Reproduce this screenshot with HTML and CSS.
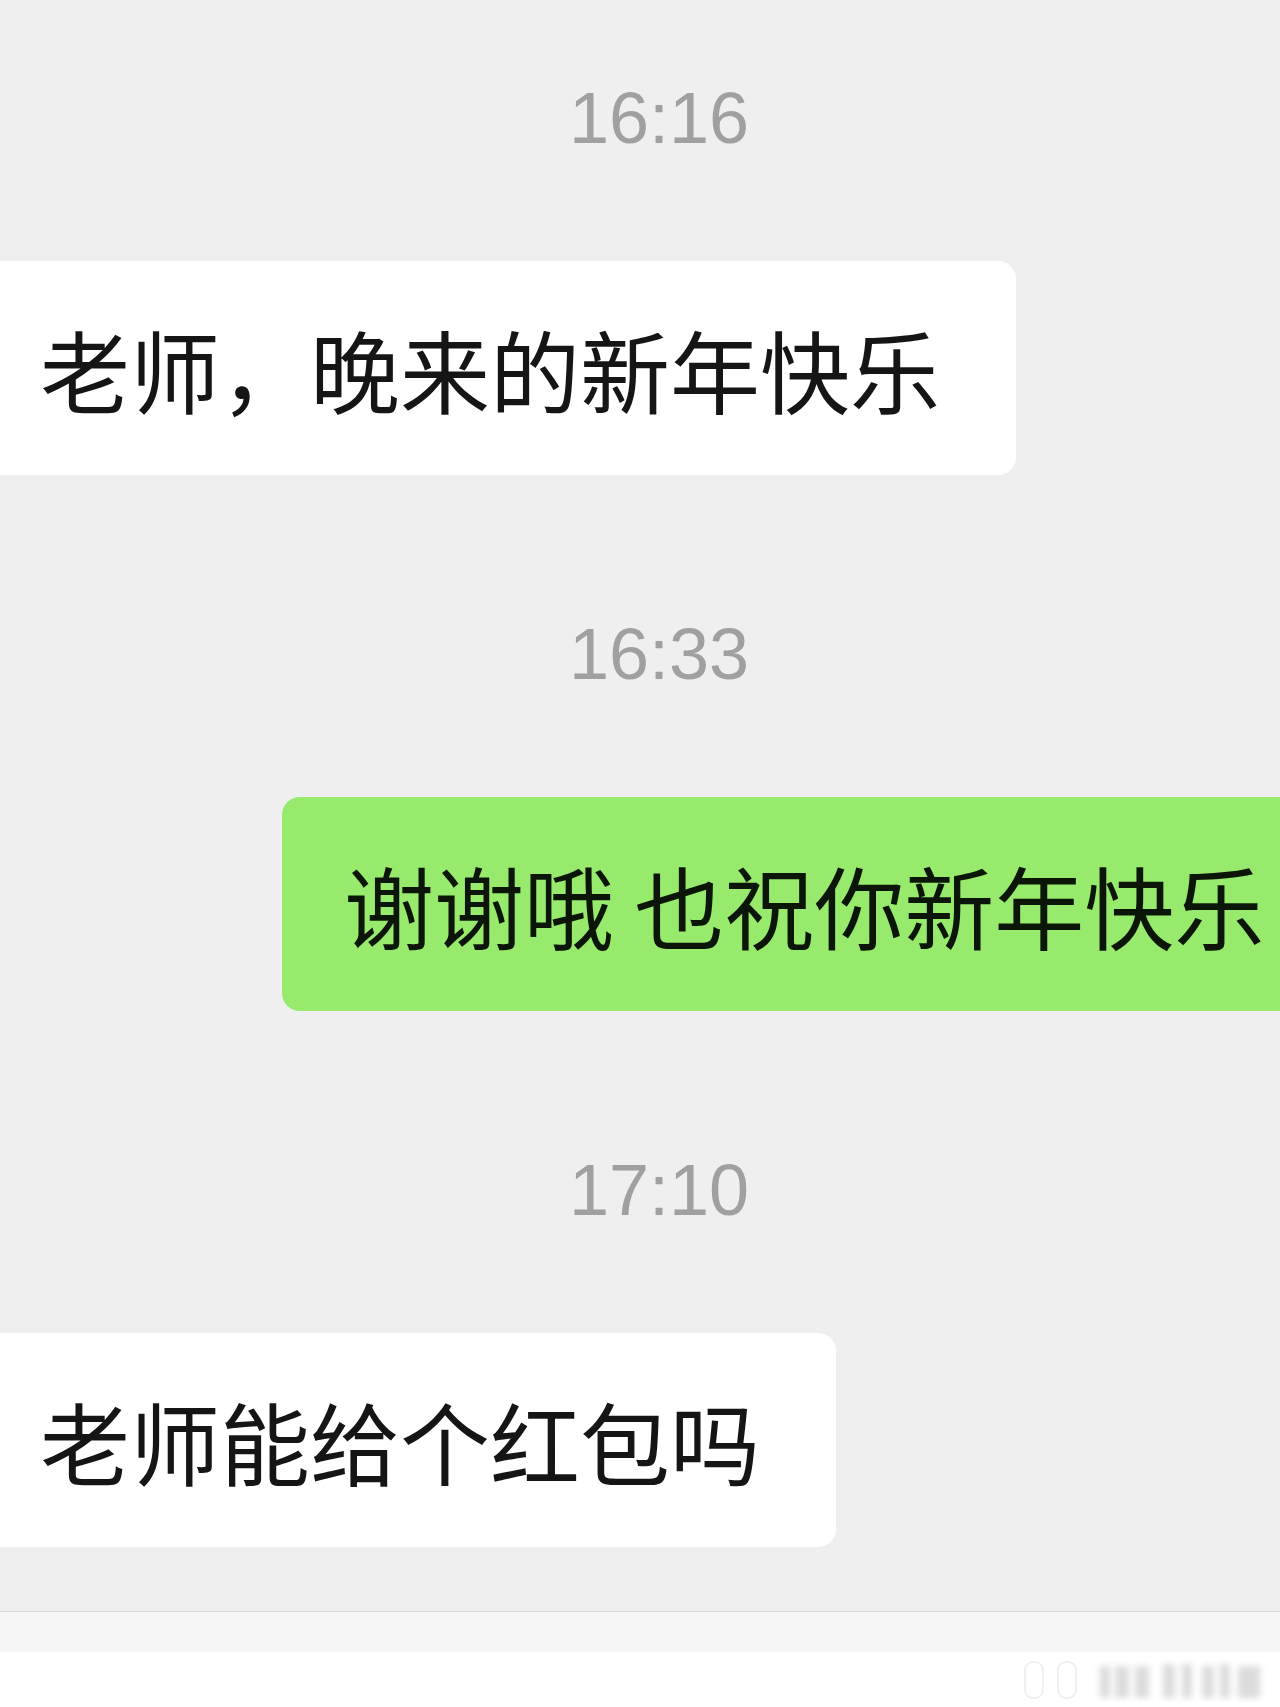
FILE: index.html
```html
<!DOCTYPE html>
<html lang="zh-CN">
<head>
    <meta charset="UTF-8">
    <meta name="viewport" content="width=device-width, initial-scale=1.0">
    <title>聊天</title>
    <link rel="stylesheet" href="styles.css">
</head>
<body>
    <div class="chat">
        <div class="time">16:16</div>
        <div class="msg in">
            <div class="bubble">老师，晚来的新年快乐</div>
        </div>

        <div class="time">16:33</div>
        <div class="msg out">
            <div class="bubble">谢谢哦 也祝你新年快乐</div>
        </div>

        <div class="time">17:10</div>
        <div class="msg in">
            <div class="bubble">老师能给个红包吗</div>
        </div>
    </div>
    <div class="input-bar"></div>
    <div class="footer">
        <svg class="mark" width="250" height="44" viewBox="0 0 250 44">
            <defs>
                <filter id="blur"><feGaussianBlur stdDeviation="3"/></filter>
            </defs>
            <rect x="5" y="4" width="18" height="36" rx="8" fill="#fff" stroke="#ececec" stroke-width="1.5"/>
            <rect x="38" y="4" width="18" height="36" rx="8" fill="#fff" stroke="#ececec" stroke-width="1.5"/>
            <g filter="url(#blur)" fill="#dcdcdc">
                <rect x="80" y="8" width="10" height="32"/>
                <rect x="95" y="8" width="14" height="32"/>
                <rect x="115" y="8" width="14" height="32"/>
                <rect x="143" y="6" width="12" height="34"/>
                <rect x="162" y="6" width="10" height="34"/>
                <rect x="182" y="8" width="12" height="32"/>
                <rect x="200" y="6" width="10" height="34"/>
                <rect x="218" y="8" width="22" height="32"/>
            </g>
        </svg>
    </div>
</body>
</html>
```

FILE: styles.css
```css
* {
    margin: 0;
    padding: 0;
    box-sizing: border-box;
}
html,
body {
    width: 1280px;
    height: 1707px;
    overflow: hidden;
}
body {
    background: #efefef;
    font-family: "Noto Sans CJK SC", "Noto Sans", sans-serif;
}
.chat {
    height: 1611px;
    padding-top: 82px;
}
.time {
    font-family: "Liberation Sans", Arial, sans-serif;
    font-size: 72px;
    line-height: 72px;
    height: 72px;
    text-align: center;
    color: #a0a0a0;
    padding-left: 38px;
    margin-top: 143px;
    margin-bottom: 107px;
}
.chat .time:first-child {
    margin-top: 0;
}
.msg {
    display: flex;
}
.bubble {
    font-size: 90px;
    line-height: 126px;
    padding: 44px 76px 44px 40px;
    color: #151515;
    white-space: nowrap;
    background: #fff;
    border-radius: 0 18px 18px 0;
}
.msg.out .bubble {
    margin-left: 282px;
    padding-left: 62px;
    background: #98ea6c;
    color: #0c1608;
    border-radius: 18px 0 0 18px;
}
.input-bar {
    height: 41px;
    background: #f6f6f6;
    border-top: 1px solid #d8d8d8;
}
.footer {
    height: 55px;
    background: #fff;
    display: flex;
    justify-content: flex-end;
    align-items: flex-start;
    padding: 6px 10px 0 0;
}
.mark {
    display: block;
}
```
